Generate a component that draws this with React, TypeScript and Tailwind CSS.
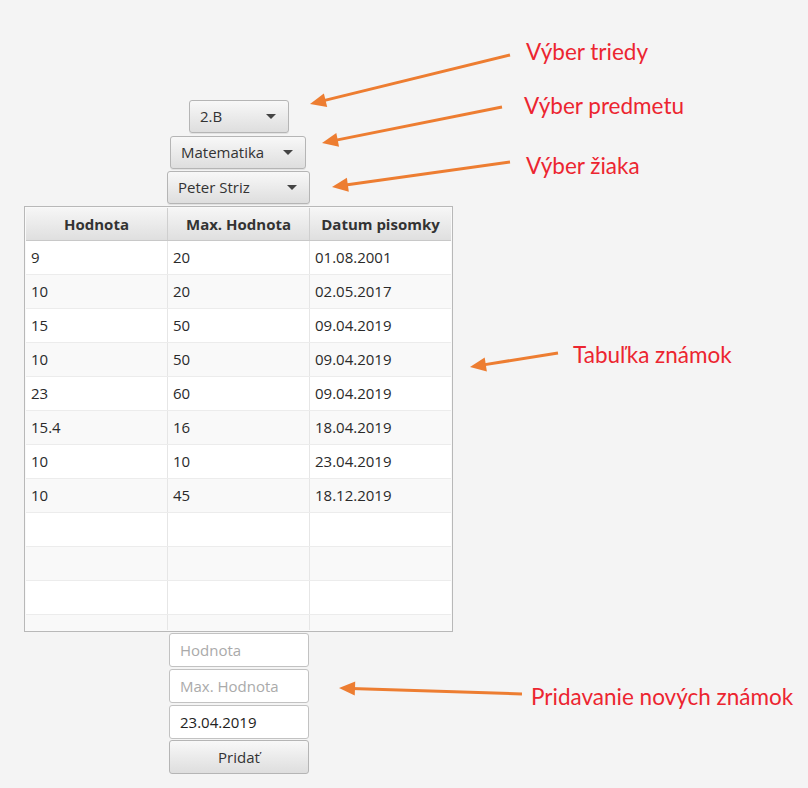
import React from 'react';

interface Grade {
    value: string;
    max: string;
    date: string;
}

const GRADES: Grade[] = [
    { value: '9', max: '20', date: '01.08.2001' },
    { value: '10', max: '20', date: '02.05.2017' },
    { value: '15', max: '50', date: '09.04.2019' },
    { value: '10', max: '50', date: '09.04.2019' },
    { value: '23', max: '60', date: '09.04.2019' },
    { value: '15.4', max: '16', date: '18.04.2019' },
    { value: '10', max: '10', date: '23.04.2019' },
    { value: '10', max: '45', date: '18.12.2019' },
];

const EMPTY_ROWS = 3;

// annotation arrows: [startX, startY, tipX, tipY]
const ARROWS: [number, number, number, number][] = [
    [510, 55, 310, 104],
    [502, 107, 322, 143],
    [510, 162, 332, 187],
    [558, 353, 470, 367],
    [522, 694, 339, 688],
];

const LABELS = [
    { text: 'Výber triedy', x: 526, y: 37 },
    { text: 'Výber predmetu', x: 524, y: 91 },
    { text: 'Výber žiaka', x: 526, y: 151 },
    { text: 'Tabuľka známok', x: 573, y: 340 },
    { text: 'Pridavanie nových známok', x: 531, y: 682 },
];

function arrowHead(sx: number, sy: number, tx: number, ty: number) {
    const dx = tx - sx;
    const dy = ty - sy;
    const len = Math.sqrt(dx * dx + dy * dy);
    const ux = dx / len;
    const uy = dy / len;
    const bx = tx - ux * 16;
    const by = ty - uy * 16;
    const w = 7;
    return `${tx},${ty} ${bx - uy * w},${by + ux * w} ${bx + uy * w},${by - ux * w}`;
}

function ComboBox({ label, className }: { label: string; className: string }) {
    return (
        <div
            className={`flex h-[33px] items-center justify-between rounded-[3px] border border-[#b5b5b5] bg-gradient-to-b from-[#f8f8f8] to-[#dedede] pl-[10px] pr-[12px] text-[15px] text-[#333] shadow-[0_1px_0_#e2e2e2] ${className}`}
        >
            <span>{label}</span>
            <span className="h-0 w-0 border-x-[5px] border-t-[5px] border-x-transparent border-t-[#444]" />
        </div>
    );
}

function TextField({ value, placeholder }: { value?: string; placeholder?: string }) {
    return (
        <div className="flex h-[34px] w-[140px] items-center rounded-[3px] border border-[#c2c2c2] bg-white px-[10px] text-[15px]">
            {value ? (
                <span className="text-[#222]">{value}</span>
            ) : (
                <span className="text-[#aaa]">{placeholder}</span>
            )}
        </div>
    );
}

export default function App() {
    return (
        <div
            className="relative h-[788px] w-[808px] overflow-hidden bg-[#f4f4f4]"
            style={{ fontFamily: '"Open Sans", "Noto Sans", sans-serif' }}
        >
            <div className="flex flex-col items-start pl-[24px] pt-[100px]">
                <ComboBox label="2.B" className="ml-[165px] w-[100px]" />
                <ComboBox label="Matematika" className="ml-[146px] mt-[3px] w-[136px]" />
                <ComboBox label="Peter Striz" className="ml-[143px] mt-[2px] w-[143px]" />

                <div className="mt-[2px] w-[429px] border border-[#b8b8b8] bg-[#f9f9f9] p-px">
                    <div className="grid h-[33px] grid-cols-[142px_142px_1fr] border-b border-[#c8c8c8] bg-gradient-to-b from-[#f6f6f6] to-[#dfdfdf] text-[15px] font-bold text-[#333]">
                        <div className="flex items-center justify-center border-r border-[#cfcfcf]">Hodnota</div>
                        <div className="flex items-center justify-center border-r border-[#cfcfcf]">Max. Hodnota</div>
                        <div className="flex items-center justify-center">Datum pisomky</div>
                    </div>
                    <div className="h-[389px] overflow-hidden">
                        {[...GRADES, ...Array.from({ length: EMPTY_ROWS + 1 }, () => null)].map((g, i) => (
                            <div
                                key={i}
                                className={`grid h-[34px] grid-cols-[142px_142px_1fr] border-b border-[#ececec] text-[15px] text-[#2a2a2a] ${
                                    i % 2 === 0 ? 'bg-white' : 'bg-[#f9f9f9]'
                                }`}
                            >
                                <div className="flex items-center border-r border-[#e6e6e6] pl-[5px]">{g?.value}</div>
                                <div className="flex items-center border-r border-[#e6e6e6] pl-[5px]">{g?.max}</div>
                                <div className="flex items-center pl-[5px]">{g?.date}</div>
                            </div>
                        ))}
                    </div>
                </div>

                <div className="ml-[145px] mt-px flex flex-col gap-[2px]">
                    <TextField placeholder="Hodnota" />
                    <TextField placeholder="Max. Hodnota" />
                    <TextField value="23.04.2019" />
                    <div className="-mt-px flex h-[34px] w-[140px] items-center justify-center rounded-[3px] border border-[#b5b5b5] bg-gradient-to-b from-[#f8f8f8] to-[#dedede] text-[15px] text-[#333]">
                        Pridať
                    </div>
                </div>
            </div>

            <svg className="pointer-events-none absolute left-0 top-0" width={808} height={788}>
                {ARROWS.map(([sx, sy, tx, ty], i) => {
                    const dx = tx - sx;
                    const dy = ty - sy;
                    const len = Math.sqrt(dx * dx + dy * dy);
                    const ex = tx - (dx / len) * 12;
                    const ey = ty - (dy / len) * 12;
                    return (
                        <g key={i}>
                            <line x1={sx} y1={sy} x2={ex} y2={ey} stroke="#ed7d31" strokeWidth={3} />
                            <polygon points={arrowHead(sx, sy, tx, ty)} fill="#ed7d31" />
                        </g>
                    );
                })}
            </svg>

            {LABELS.map((l) => (
                <div
                    key={l.text}
                    className="absolute whitespace-nowrap text-[22.5px] leading-[30px] text-[#ec2530]"
                    style={{ left: l.x, top: l.y, fontFamily: 'Lato, "Open Sans", sans-serif' }}
                >
                    {l.text}
                </div>
            ))}
        </div>
    );
}
